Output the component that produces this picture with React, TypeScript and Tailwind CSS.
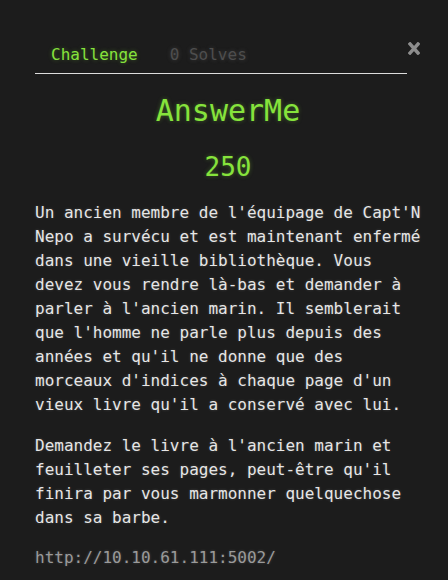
import React from "react";

export default function App() {
  const mono = { fontFamily: '"DejaVu Sans Mono", "Liberation Mono", monospace' };
  return (
    <div className="w-[448px] h-[580px] overflow-hidden bg-[#1c1c1c] text-[#e6e6e6]" style={mono}>
      <div className="relative pl-[35px] pt-[33px]">
        <div className="w-[372px] flex border-b border-[#dcdcdc] text-[16px] leading-[24px]">
          <div className="px-4 pt-[10px] pb-[6px] text-[#86e33c] [text-shadow:0_0_4px_rgba(134,227,60,0.35)]">Challenge</div>
          <div className="px-4 pt-[10px] pb-[6px] text-[#4e4e4e] [text-shadow:0_0_4px_rgba(120,120,120,0.4)]">0 Solves</div>
        </div>
        <svg className="absolute left-[408px] top-[42px]" width="12" height="13" viewBox="0 0 12 13">
          <path d="M2 2 L10 11 M10 2 L2 11" stroke="#8d8d8d" strokeWidth="3.4" strokeLinecap="square" fill="none" />
        </svg>
        <div className="w-[386px] text-center">
          <div className="mt-[19px] text-[30px] leading-[36px] text-[#86e33c] [text-shadow:0_0_4px_rgba(134,227,60,0.35)]">AnswerMe</div>
          <div className="mt-[23px] text-[26px] leading-[31px] text-[#86e33c] [text-shadow:0_0_4px_rgba(134,227,60,0.35)]">250</div>
        </div>
        <div className="w-[390px] mt-[18px] text-[16px] leading-[24px] [text-shadow:0_0_3px_rgba(255,255,255,0.2)]">
          <p>Un ancien membre de l'équipage de Capt'N Nepo a survécu et est maintenant enfermé dans une vieille bibliothèque. Vous devez vous rendre là-bas et demander à parler à l'ancien marin. Il semblerait que l'homme ne parle plus depuis des années et qu'il ne donne que des morceaux d'indices à chaque page d'un vieux livre qu'il a conservé avec lui.</p>
          <p className="mt-[17px]">Demandez le livre à l'ancien marin et feuilleter ses pages, peut-être qu'il finira par vous marmonner quelquechose dans sa barbe.</p>
          <p className="mt-[16px] text-[#9a9a9a]">http://10.10.61.111:5002/</p>
        </div>
      </div>
    </div>
  );
}
